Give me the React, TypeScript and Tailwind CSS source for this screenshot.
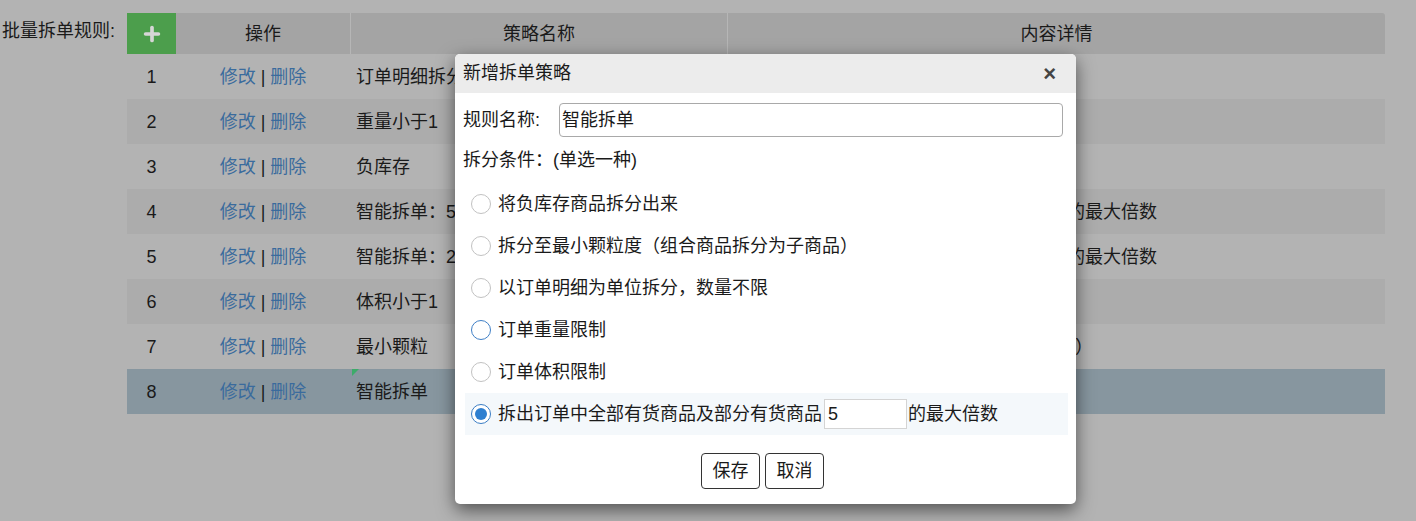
import { Plus } from "lucide-react";

const rules = [
  { id: 1, name: "订单明细拆分", detail: "以订单明细为单位拆分，数量不限" },
  { id: 2, name: "重量小于1", detail: "订单重量小于1" },
  { id: 3, name: "负库存", detail: "将负库存商品拆分出来" },
  { id: 4, name: "智能拆单：5", detail: "拆出订单中全部有货商品及部分有货商品5的最大倍数" },
  { id: 5, name: "智能拆单：2", detail: "拆出订单中全部有货商品及部分有货商品2的最大倍数" },
  { id: 6, name: "体积小于1", detail: "订单体积小于1" },
  { id: 7, name: "最小颗粒", detail: "拆分至最小颗粒度（组合商品拆分为子商品）" },
  { id: 8, name: "智能拆单", detail: "" },
];

const options = [
  { label: "将负库存商品拆分出来", state: "off" },
  { label: "拆分至最小颗粒度（组合商品拆分为子商品）", state: "off" },
  { label: "以订单明细为单位拆分，数量不限", state: "off" },
  { label: "订单重量限制", state: "focus" },
  { label: "订单体积限制", state: "off" },
];

function Radio({ state }: { state: string }) {
  if (state === "on") {
    return (
      <span className="w-5 h-5 rounded-full border-[1.5px] border-[#3a7dc4] bg-white flex items-center justify-center shrink-0">
        <span className="w-[12px] h-[12px] rounded-full bg-[#2e7fd0]" />
      </span>
    );
  }
  return (
    <span
      className={
        state === "focus"
          ? "w-5 h-5 rounded-full border-[1.5px] border-[#3f7fc6] bg-white shrink-0"
          : "w-5 h-5 rounded-full border-[1.5px] border-[#c2c2c2] bg-white shrink-0"
      }
    />
  );
}

export default function App() {
  return (
    <div
      className="relative w-[1416px] h-[521px] bg-[#b3b3b3] overflow-hidden text-[#1a1a1a]"
      style={{ fontFamily: '"Liberation Sans", "Noto Sans CJK SC", sans-serif' }}
    >
      {/* background page (dimmed) */}
      <div className="flex pt-[13px]">
        <div className="w-[127px] h-[36px] flex items-center pl-[2px] text-[18px]">批量拆单规则:</div>
        <div className="w-[1258px]">
          <div className="grid grid-cols-[49px_174px_377px_658px] h-[41px] bg-[#a4a4a4] text-[18px] rounded-tr-[3px]">
            <div className="bg-[#4c9e4c] flex items-center justify-center">
              <Plus className="w-[22px] h-[22px] text-[#d6d6d6]" strokeWidth={4} />
            </div>
            <div className="flex items-center justify-center pt-[1px]">操作</div>
            <div className="flex items-center justify-center pt-[1px] border-l border-[#b6b6b6]">策略名称</div>
            <div className="flex items-center justify-center pt-[1px] border-l border-[#b6b6b6]">内容详情</div>
          </div>
          {rules.map((rule, index) => (
            <div
              key={rule.id}
              className={
                "grid grid-cols-[49px_174px_377px_658px] h-[45px] pt-[2px] text-[18px] " +
                (rule.id === 8 ? "bg-[#87969f]" : index % 2 === 1 ? "bg-[#acacac]" : "bg-[#b3b3b3]")
              }
            >
              <div className="flex items-center justify-center">{rule.id}</div>
              <div className="flex items-center justify-center gap-[5px]">
                <span className="text-[#3a6b9d]">修改</span>
                <span>|</span>
                <span className="text-[#3a6b9d]">删除</span>
              </div>
              <div className="relative flex items-center pl-[6px] whitespace-nowrap">
                {rule.id === 8 && (
                  <span className="absolute -top-[2px] left-[2px] w-0 h-0 border-t-[7px] border-t-[#3dab6a] border-r-[7px] border-r-transparent" />
                )}
                {rule.name}
              </div>
              <div className="flex items-center pl-[6px] whitespace-nowrap">{rule.detail}</div>
            </div>
          ))}
        </div>
      </div>

      {/* modal */}
      <div className="absolute left-[455px] top-[54px] w-[621px] h-[450px] bg-white rounded-[5px] shadow-[0_6px_18px_rgba(0,0,0,0.55)] text-[18px] text-[#1a1a1a]">
        <div className="h-[39px] bg-[#ececec] rounded-t-[5px] flex items-center justify-between pl-[8px] pr-[20px]">
          <span>新增拆单策略</span>
          <span className="text-[22px] font-bold text-[#444] leading-none">×</span>
        </div>
        <div className="pt-[10px] px-[8px]">
          <div className="flex items-center h-[34px]">
            <span className="w-[96px]">规则名称:</span>
            <div className="w-[504px] h-[34px] border border-[#a9a9a9] rounded-[4px] flex items-center pl-[2px]">
              智能拆单
            </div>
          </div>
          <div className="h-[46px] flex items-center">拆分条件：(单选一种)</div>
        </div>
        <div className="ml-[10px] mr-[8px]">
          {options.map((opt) => (
            <div key={opt.label} className="h-[42px] flex items-center pl-[6px] gap-[7px] whitespace-nowrap">
              <Radio state={opt.state} />
              <span>{opt.label}</span>
            </div>
          ))}
          <div className="h-[42px] flex items-center pl-[6px] gap-[7px] bg-[#f4f8fb] whitespace-nowrap">
            <Radio state="on" />
            <span>拆出订单中全部有货商品及部分有货商品</span>
            <div className="w-[83px] h-[30px] bg-white border border-[#d4d4d4] flex items-center pl-[3px] -ml-[5px]">5</div>
            <span className="-ml-[6px]">的最大倍数</span>
          </div>
        </div>
        <div className="flex justify-center gap-[5px] mt-[18px] pr-[6px]">
          <button className="w-[59px] h-[36px] border border-[#333] rounded-[4px] bg-white">保存</button>
          <button className="w-[59px] h-[36px] border border-[#333] rounded-[4px] bg-white">取消</button>
        </div>
      </div>
    </div>
  );
}
